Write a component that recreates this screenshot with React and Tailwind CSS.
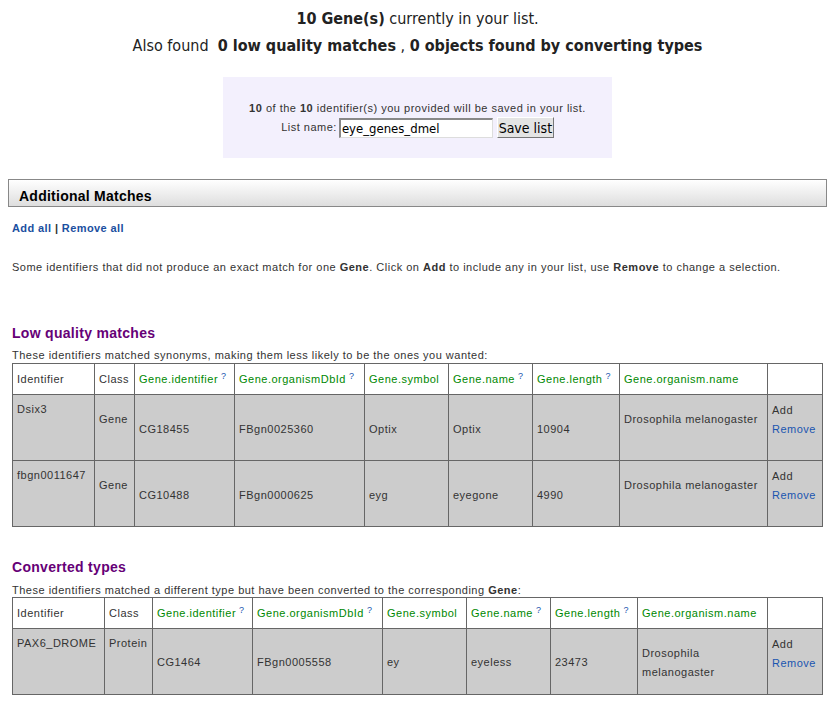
import React from 'react'

const body = { fontFamily: '"Liberation Sans", Arial, sans-serif' }
const narrow = { fontFamily: '"Liberation Sans Narrow", "DejaVu Sans Condensed", "Liberation Sans", sans-serif' }

const lowRows = [
  { id: 'Dsix3', cls: 'Gene', gid: 'CG18455', db: 'FBgn0025360', sym: 'Optix', name: 'Optix', len: '10904', org: 'Drosophila melanogaster' },
  { id: 'fbgn0011647', cls: 'Gene', gid: 'CG10488', db: 'FBgn0000625', sym: 'eyg', name: 'eyegone', len: '4990', org: 'Drosophila melanogaster' },
]

function Q() {
  return <sup className="relative -top-[4px] ml-[3px] text-[9px] text-[#1a55b0]">?</sup>
}

function HeadRow({ widths }) {
  const heads = [
    ['Identifier', false, false],
    ['Class', false, false],
    ['Gene.identifier', true, true],
    ['Gene.organismDbId', true, true],
    ['Gene.symbol', true, false],
    ['Gene.name', true, true],
    ['Gene.length', true, true],
    ['Gene.organism.name', true, false],
    ['', false, false],
  ]
  return (
    <tr className="h-[31px] bg-white">
      {heads.map(([t, green, q], i) => (
        <td
          key={i}
          style={{ width: widths[i] }}
          className={`border border-[#666] px-[4px] align-middle font-normal whitespace-nowrap ${green ? 'text-[#008800]' : 'text-[#333]'}`}
        >
          {t}
          {q && <Q />}
        </td>
      ))}
    </tr>
  )
}

function Cell({ pt, children }) {
  return (
    <td className="border border-[#666] bg-[#cccccc] px-[4px] align-top text-[#333]">
      <div style={{ paddingTop: pt }} className="leading-[19px]">{children}</div>
    </td>
  )
}

function Actions() {
  return (
    <>
      <div>Add</div>
      <div className="text-[#1a55b0]">Remove</div>
    </>
  )
}

export default function App() {
  const w1 = [82, 40, 100, 130, 84, 84, 87, 148, 55]
  const w2 = [92, 48, 100, 130, 84, 84, 87, 130, 55]

  return (
    <div className="w-[835px] h-[704px] overflow-hidden bg-white text-[11px] tracking-[0.5px] text-[#333]" style={body}>
      <div className="pt-[8px] text-center text-[16px] tracking-normal text-[#222]" style={narrow}>
        <div className="leading-[22px]">
          <b>10 Gene(s)</b> currently in your list.
        </div>
        <div className="mt-[5px] leading-[22px]">
          Also found&nbsp; <b>0 low quality matches</b> , <b>0 objects found by converting types</b>
        </div>
      </div>

      <div className="mx-auto mt-[20px] flex h-[81px] w-[389px] flex-col items-center bg-[#f3f0fd] pt-[23px]">
        <div className="leading-[16px]">
          <b>10</b> of the <b>10</b> identifier(s) you provided will be saved in your list.
        </div>
        <div className="mt-[1px] flex items-center">
          <span className="mr-[2px]">List name:</span>
          <input
            readOnly
            value="eye_genes_dmel"
            className="h-[20px] w-[154px] border-t-2 border-l-2 border-b border-r border-t-[#888] border-l-[#888] border-b-[#ddd] border-r-[#ddd] bg-white px-[1px] text-[13px] tracking-normal text-black outline-none"
            style={narrow}
          />
          <button
            className="ml-[4px] h-[21px] w-[57px] border border-t-[#fff] border-l-[#fff] border-b-[#777] border-r-[#777] bg-[#e4e4e4] text-[14px] leading-[18px] tracking-normal text-black"
            style={narrow}
          >
            Save list
          </button>
        </div>
      </div>

      <div className="mx-[8px] mt-[21px] flex h-[28px] items-center border border-[#888] bg-gradient-to-b from-white to-[#dedede] pl-[10px] text-[14px] font-bold tracking-[0.25px] text-black">
        <span className="pt-[7px]">Additional Matches</span>
      </div>

      <div className="px-[12px]">
        <div className="mt-[14px] font-bold leading-[14px] tracking-[0.4px]">
          <a className="text-[#1a4fa0]">Add all</a> | <a className="text-[#1a4fa0]">Remove all</a>
        </div>
        <div className="mt-[25px] leading-[14px]">
          Some identifiers that did not produce an exact match for one <b>Gene</b>. Click on <b>Add</b> to include any in your
          list, use <b>Remove</b> to change a selection.
        </div>

        <h2 className="mt-[51px] text-[14px] font-bold leading-[16px] tracking-[0.3px] text-[#660077]">Low quality matches</h2>
        <div className="mt-[7px] leading-[14px]">These identifiers matched synonyms, making them less likely to be the ones you wanted:</div>
        <table className="mt-[1px] w-[810px] table-fixed border-collapse">
          <tbody>
            <HeadRow widths={w1} />
            {lowRows.map((r) => (
              <tr key={r.id} className="h-[66px]">
                <Cell pt={5}>{r.id}</Cell>
                <Cell pt={15}>{r.cls}</Cell>
                <Cell pt={25}>{r.gid}</Cell>
                <Cell pt={25}>{r.db}</Cell>
                <Cell pt={25}>{r.sym}</Cell>
                <Cell pt={25}>{r.name}</Cell>
                <Cell pt={25}>{r.len}</Cell>
                <Cell pt={15}>{r.org}</Cell>
                <Cell pt={6}><Actions /></Cell>
              </tr>
            ))}
          </tbody>
        </table>

        <h2 className="mt-[32px] text-[14px] font-bold leading-[16px] tracking-[0.3px] text-[#660077]">Converted types</h2>
        <div className="mt-[8px] leading-[14px]">
          These identifiers matched a different type but have been converted to the corresponding <b>Gene</b>:
        </div>
        <table className="w-[810px] table-fixed border-collapse">
          <tbody>
            <HeadRow widths={w2} />
            <tr className="h-[66px]">
              <Cell pt={5}>PAX6_DROME</Cell>
              <Cell pt={5}>Protein</Cell>
              <Cell pt={24}>CG1464</Cell>
              <Cell pt={24}>FBgn0005558</Cell>
              <Cell pt={24}>ey</Cell>
              <Cell pt={24}>eyeless</Cell>
              <Cell pt={24}>23473</Cell>
              <Cell pt={15}>Drosophila<br />melanogaster</Cell>
              <Cell pt={6}><Actions /></Cell>
            </tr>
          </tbody>
        </table>
      </div>
    </div>
  )
}
